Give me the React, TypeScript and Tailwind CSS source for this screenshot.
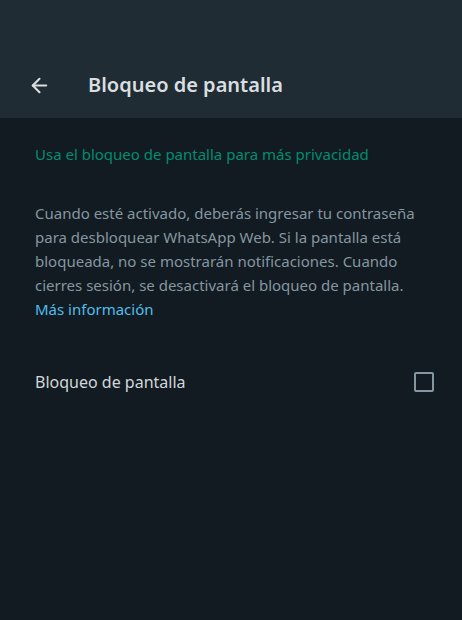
import { ArrowLeft } from 'lucide-react';

export default function App() {
  return (
    <div className="w-[462px] h-[620px] bg-[#111b21] flex flex-col" style={{ fontFamily: '"Noto Sans", "Open Sans", sans-serif' }}>
      {/* Cabecera */}
      <div className="h-[118px] bg-[#202c33] flex items-end pb-[18px] shrink-0">
        <div className="flex items-center h-[30px]">
          <button className="ml-[28px] w-[26px] text-[#d9dee0]">
            <ArrowLeft size={23} strokeWidth={2.2} />
          </button>
          <h1 className="ml-[34px] text-[20px] font-semibold text-[#d9dee0]">Bloqueo de pantalla</h1>
        </div>
      </div>

      <div className="px-[35px]">
        <p className="mt-[25px] text-[15px] leading-[22px] text-[#00a884] opacity-80">Usa el bloqueo de pantalla para más privacidad</p>

        <p className="mt-[36px] text-[15px] leading-[24px] text-[#8696a0]">
          Cuando esté activado, deberás ingresar tu contraseña para desbloquear WhatsApp Web. Si la pantalla está bloqueada, no se mostrarán notificaciones. Cuando cierres sesión, se desactivará el bloqueo de pantalla.
          <a className="block text-[#53bdeb]">Más información</a>
        </p>

        <div className="mt-[49px] flex items-center justify-between">
          <span className="text-[16px] text-[#d1d7db]">Bloqueo de pantalla</span>
          <div className="w-[20px] h-[20px] border-2 border-[#8696a0] rounded-[2px] mr-[-7px]" />
        </div>
      </div>
    </div>
  );
}
